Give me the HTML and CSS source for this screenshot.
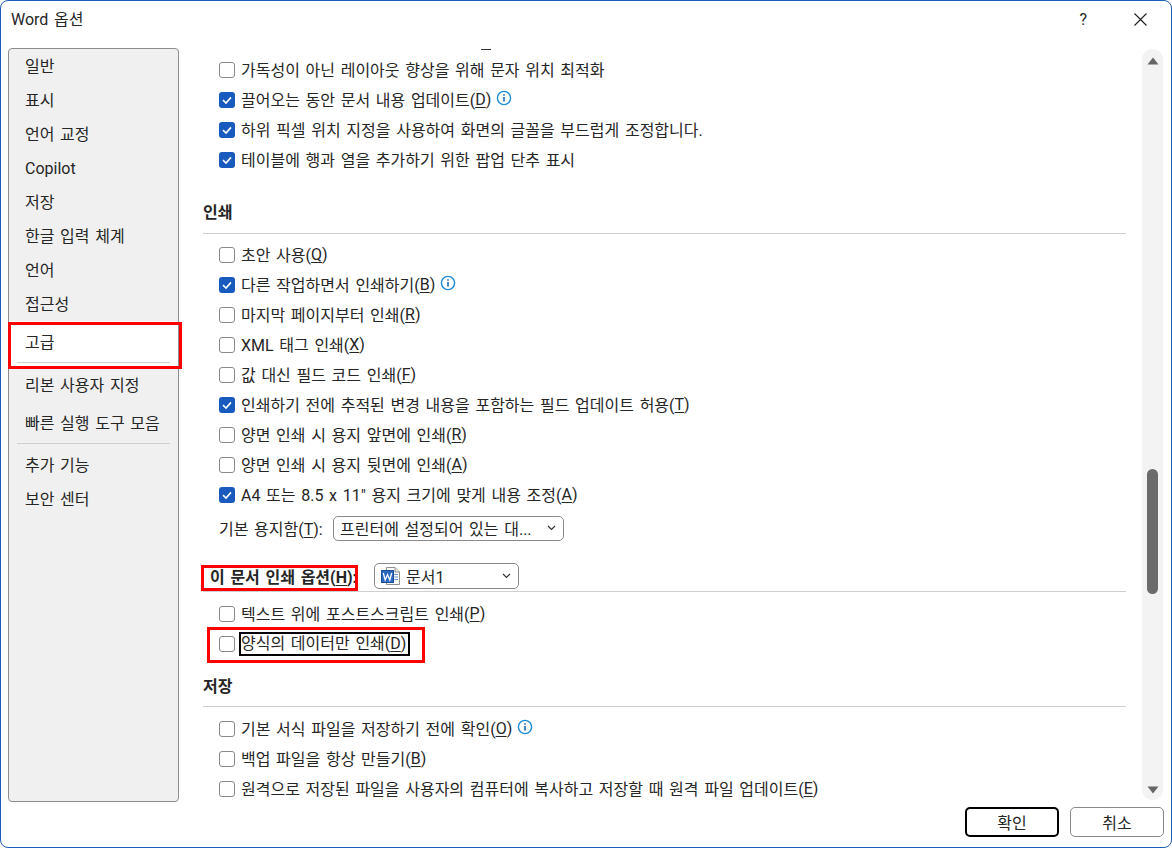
FILE: index.html
```html
<!DOCTYPE html>
<html lang="ko">
<head>
    <meta charset="UTF-8">
    <title>Word 옵션</title>
    <link rel="stylesheet" href="styles.css">
</head>
<body>
    <div class="dialog">
        <div class="titlebar">
            <span class="title">Word 옵션</span>
            <span class="help">?</span>
            <svg class="close" width="13" height="13" viewBox="0 0 13 13"><path d="M0.5 0.5L12.5 12.5M12.5 0.5L0.5 12.5" stroke="#1f1f1f" stroke-width="1.1" fill="none"/></svg>
        </div>

        <div class="content">
            <nav class="nav">
                <div class="nav-item">일반</div>
                <div class="nav-item">표시</div>
                <div class="nav-item">언어 교정</div>
                <div class="nav-item">Copilot</div>
                <div class="nav-item">저장</div>
                <div class="nav-item">한글 입력 체계</div>
                <div class="nav-item">언어</div>
                <div class="nav-item">접근성</div>
                <div class="nav-selected">
                    <div class="nav-selected-label">고급</div>
                    <div class="nav-line"></div>
                </div>
                <div class="nav-item nav-ribbon">리본 사용자 지정</div>
                <div class="nav-item nav-quick">빠른 실행 도구 모음</div>
                <div class="nav-line nav-line-group"></div>
                <div class="nav-item">추가 기능</div>
                <div class="nav-item">보안 센터</div>
            </nav>

            <main class="options">
                <div class="clipped-key"></div>

                <label class="row"><span class="box"></span>가독성이 아닌 레이아웃 향상을 위해 문자 위치 최적화</label>
                <label class="row"><span class="box checked"><svg width="16" height="16" viewBox="0 0 16 16"><path d="M4 8.2L7 11L12 5.4" stroke="#fff" stroke-width="1.6" fill="none"/></svg></span>끌어오는 동안 문서 내용 업데이트(<u>D</u>)<svg class="info" width="16" height="16" viewBox="0 0 16 16"><circle cx="8" cy="8" r="6.6" fill="none" stroke="#1e8cd8" stroke-width="1.4"/><path d="M8 7v4.4M8 4.2v1.5" stroke="#1e70c0" stroke-width="1.7"/></svg></label>
                <label class="row"><span class="box checked"><svg width="16" height="16" viewBox="0 0 16 16"><path d="M4 8.2L7 11L12 5.4" stroke="#fff" stroke-width="1.6" fill="none"/></svg></span>하위 픽셀 위치 지정을 사용하여 화면의 글꼴을 부드럽게 조정합니다.</label>
                <label class="row"><span class="box checked"><svg width="16" height="16" viewBox="0 0 16 16"><path d="M4 8.2L7 11L12 5.4" stroke="#fff" stroke-width="1.6" fill="none"/></svg></span>테이블에 행과 열을 추가하기 위한 팝업 단추 표시</label>

                <h2 class="section section-print">인쇄</h2>
                <label class="row"><span class="box"></span>초안 사용(<u>Q</u>)</label>
                <label class="row"><span class="box checked"><svg width="16" height="16" viewBox="0 0 16 16"><path d="M4 8.2L7 11L12 5.4" stroke="#fff" stroke-width="1.6" fill="none"/></svg></span>다른 작업하면서 인쇄하기(<u>B</u>)<svg class="info" width="16" height="16" viewBox="0 0 16 16"><circle cx="8" cy="8" r="6.6" fill="none" stroke="#1e8cd8" stroke-width="1.4"/><path d="M8 7v4.4M8 4.2v1.5" stroke="#1e70c0" stroke-width="1.7"/></svg></label>
                <label class="row"><span class="box"></span>마지막 페이지부터 인쇄(<u>R</u>)</label>
                <label class="row"><span class="box"></span>XML 태그 인쇄(<u>X</u>)</label>
                <label class="row"><span class="box"></span>값 대신 필드 코드 인쇄(<u>F</u>)</label>
                <label class="row"><span class="box checked"><svg width="16" height="16" viewBox="0 0 16 16"><path d="M4 8.2L7 11L12 5.4" stroke="#fff" stroke-width="1.6" fill="none"/></svg></span>인쇄하기 전에 추적된 변경 내용을 포함하는 필드 업데이트 허용(<u>T</u>)</label>
                <label class="row"><span class="box"></span>양면 인쇄 시 용지 앞면에 인쇄(<u>R</u>)</label>
                <label class="row"><span class="box"></span>양면 인쇄 시 용지 뒷면에 인쇄(<u>A</u>)</label>
                <label class="row"><span class="box checked"><svg width="16" height="16" viewBox="0 0 16 16"><path d="M4 8.2L7 11L12 5.4" stroke="#fff" stroke-width="1.6" fill="none"/></svg></span>A4 또는 8.5 x 11" 용지 크기에 맞게 내용 조정(<u>A</u>)</label>

                <div class="paper-row">
                    <span class="paper-label">기본 용지함(<u>T</u>):</span>
                    <div class="select select-paper">
                        <span>프린터에 설정되어 있는 대...</span>
                        <svg width="9" height="6" viewBox="0 0 9 6"><path d="M1 1L4.5 4.5L8 1" stroke="#333" stroke-width="1.2" fill="none"/></svg>
                    </div>
                </div>

                <h2 class="section section-doc">
                    <span class="doc-heading">이 문서 인쇄 옵션(<u>H</u>):</span>
                    <div class="select select-doc">
                        <span class="doc-name">
                            <svg width="20" height="20" viewBox="0 0 20 20">
                                <path d="M5.5 1.5H14L18.5 6V18.5H5.5Z" fill="#fff" stroke="#8f8f8f"/>
                                <path d="M14 1.5V6H18.5" fill="#e6e6e6" stroke="#8f8f8f"/>
                                <path d="M13.5 8.5H17M13.5 11H17M13.5 13.5H17" stroke="#5b8fd0"/>
                                <rect x="0.5" y="4.5" width="12" height="12" fill="#2a68c0" stroke="#1d4e9a"/>
                                <path d="M2.3 7L4.2 14L6.5 8.6L8.8 14L10.7 7" fill="none" stroke="#fff" stroke-width="1.3"/>
                            </svg>
                            문서1
                        </span>
                        <svg width="9" height="6" viewBox="0 0 9 6"><path d="M1 1L4.5 4.5L8 1" stroke="#333" stroke-width="1.2" fill="none"/></svg>
                    </div>
                </h2>
                <label class="row"><span class="box"></span>텍스트 위에 포스트스크립트 인쇄(<u>P</u>)</label>
                <label class="row"><span class="box"></span><span class="focused">양식의 데이터만 인쇄(<u>D</u>)</span></label>

                <h2 class="section section-save">저장</h2>
                <label class="row"><span class="box"></span>기본 서식 파일을 저장하기 전에 확인(<u>O</u>)<svg class="info" width="16" height="16" viewBox="0 0 16 16"><circle cx="8" cy="8" r="6.6" fill="none" stroke="#1e8cd8" stroke-width="1.4"/><path d="M8 7v4.4M8 4.2v1.5" stroke="#1e70c0" stroke-width="1.7"/></svg></label>
                <label class="row"><span class="box"></span>백업 파일을 항상 만들기(<u>B</u>)</label>
                <label class="row"><span class="box"></span>원격으로 저장된 파일을 사용자의 컴퓨터에 복사하고 저장할 때 원격 파일 업데이트(<u>E</u>)</label>
            </main>

            <div class="scrollbar">
                <svg width="12" height="8" viewBox="0 0 12 8"><path d="M6 0.5L11.5 7.5H0.5Z" fill="#666"/></svg>
                <div class="thumb"></div>
                <svg width="12" height="8" viewBox="0 0 12 8"><path d="M0.5 0.5H11.5L6 7.5Z" fill="#666"/></svg>
            </div>
        </div>

        <div class="footer">
            <button class="btn btn-default">확인</button>
            <button class="btn">취소</button>
        </div>

        <!-- red markers drawn over the screenshot -->
        <div class="marker marker-nav"></div>
        <div class="marker marker-heading"></div>
        <div class="marker marker-row"></div>
    </div>
</body>
</html>
```

FILE: styles.css
```css
* {
    margin: 0;
    padding: 0;
    box-sizing: border-box;
}

body {
    font-family: Roboto, "Noto Sans CJK KR", sans-serif;
    font-size: 16px;
    word-spacing: 1.7px;
    color: #262626;
    background: #fff;
    overflow: hidden;
}

u {
    text-decoration-thickness: 1px;
    text-underline-offset: 2px;
}

.dialog {
    position: relative;
    width: 1172px;
    height: 848px;
    border: 1px solid #1a5cb8;
    border-radius: 8px;
    background: #fff;
    overflow: hidden;
}

.titlebar {
    display: flex;
    align-items: center;
    height: 37px;
    padding: 0 24px 1px 10px;
}

.title {
    flex: 1;
    margin-bottom: 3px;
}

.help {
    margin-right: 47px;
}

.content {
    display: flex;
    height: 754px;
    margin-top: 10px;
    padding-left: 7px;
}

/* left list */
.nav {
    flex: none;
    width: 171px;
    background: #f0f0f0;
    border: 1px solid #8c8c8c;
    border-radius: 4px;
}

.nav-item {
    height: 34px;
    line-height: 35px;
    padding-left: 16px;
}

.nav-selected {
    height: 45px;
    margin-bottom: 2px;
    padding-top: 2px;
    background: #fff;
}

.nav-selected-label {
    height: 39px;
    line-height: 39px;
    padding-left: 16px;
}

.nav-line {
    height: 1px;
    margin: 0 8px;
    background: #cfcfcf;
}

.nav-quick {
    margin-top: 4px;
}

.nav-line-group {
    margin-top: 3px;
    margin-bottom: 4px;
}

/* options */
.options {
    flex: none;
    width: 963px;
    height: 754px;
    padding-left: 24px;
    overflow: hidden;
}

.clipped-key {
    width: 10px;
    height: 1px;
    margin: 1px 0 5px 278px;
    background: #333;
}

.row {
    display: flex;
    align-items: center;
    height: 30px;
    padding-left: 16px;
    padding-bottom: 2px;
    white-space: nowrap;
}

.box {
    flex: none;
    width: 16px;
    height: 16px;
    margin-top: 2px;
    margin-right: 6px;
    border: 1px solid #8a8a8a;
    border-radius: 3px;
    background: #fff;
}

.box.checked {
    border: none;
    background: #185abd;
}

.box svg {
    display: block;
}

.info {
    margin: 0 0 2px 5px;
}

.focused {
    margin-top: 2px;
    margin-left: -2px;
    padding: 0 2px 0 0;
    height: 24px;
    line-height: 20px;
    border: 2px solid #000;
}

.section {
    font-size: 16px;
    font-weight: 700;
    border-bottom: 1px solid #cfcfcf;
    width: 923px;
}

.section-print {
    height: 42px;
    line-height: 41px;
    margin-top: 17px;
    margin-bottom: 6px;
}

.section-doc {
    display: flex;
    align-items: center;
    height: 46px;
    padding-top: 17px;
    padding-bottom: 2px;
    margin-bottom: 7px;
}

.doc-heading {
    width: 171px;
    padding-left: 7px;
}

.section-save {
    height: 43px;
    line-height: 45px;
    margin-top: 5px;
    margin-bottom: 7px;
}

.paper-row {
    display: flex;
    align-items: center;
    height: 36px;
    padding-left: 16px;
}

.paper-label {
    width: 114px;
}

.select {
    display: flex;
    align-items: center;
    justify-content: space-between;
    border: 1px solid #8a8a8a;
    border-radius: 5px;
    font-weight: 400;
    padding: 0 7px 0 6px;
}

.select-paper {
    width: 231px;
    height: 25px;
}

.select-doc {
    width: 145px;
    height: 26px;
}

.doc-name {
    display: flex;
    align-items: center;
    gap: 5px;
}

.scrollbar {
    display: flex;
    flex-direction: column;
    align-items: center;
    width: 21px;
    height: 751px;
    margin-top: 1px;
    padding: 8px 0 6px;
    background: #f3f3f3;
    border-radius: 10px;
}

.thumb {
    width: 11px;
    height: 125px;
    margin-top: auto;
    margin-bottom: 192px;
    background: #6b6b6b;
    border-radius: 6px;
}

.footer {
    display: flex;
    justify-content: flex-end;
    gap: 11px;
    margin-top: 5px;
    padding-right: 7px;
}

.btn {
    width: 94px;
    height: 30px;
    font: inherit;
    color: inherit;
    background: #fff;
    border: 1px solid #8a8a8a;
    border-radius: 5px;
}

.btn-default {
    border: 2px solid #000;
}

.marker {
    position: absolute;
    border: 3px solid #f00;
}

.marker-nav {
    left: 7px;
    top: 321px;
    width: 174px;
    height: 47px;
}

.marker-heading {
    left: 200px;
    top: 564px;
    width: 157px;
    height: 26px;
}

.marker-row {
    left: 206px;
    top: 626px;
    width: 218px;
    height: 36px;
}
```
